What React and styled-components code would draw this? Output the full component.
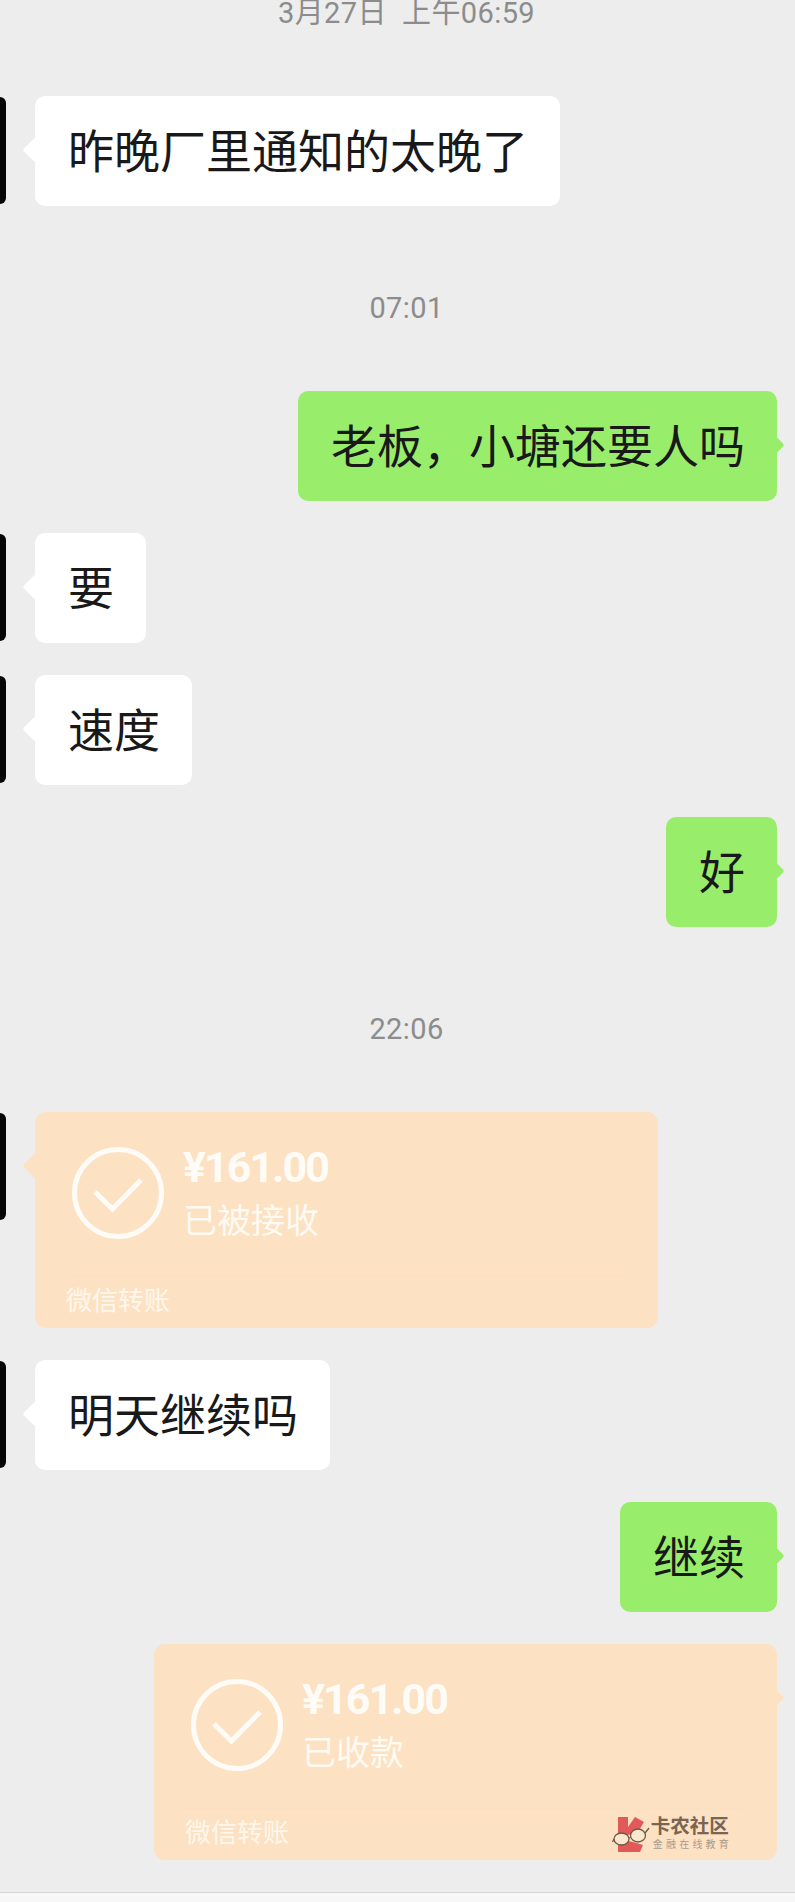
import React from 'react'
import styled, { createGlobalStyle } from 'styled-components'

const GlobalStyle = createGlobalStyle`
  html, body {
    margin: 0;
    padding: 0;
    background: #ededed;
  }
`

const Page = styled.div`
  display: flex;
  flex-direction: column;
  height: 1902px;
  overflow: hidden;
  font-family: Roboto, "Noto Sans CJK SC", sans-serif;
`

const Chat = styled.div`
  flex: 1;
  display: flex;
  flex-direction: column;
  padding-right: 18px;
  background: #ededed;
`

const BottomBar = styled.div`
  height: 11px;
  background: #f7f7f7;
  border-top: 1px solid #d6d6d6;
`

const TimeLabel = styled.div`
  height: 36px;
  line-height: 36px;
  margin: ${props => (props.$first ? '-5px' : '52px')} 0 65px 36px;
  text-align: center;
  font-size: 29px;
  letter-spacing: 0.4px;
  color: #8c8c8c;
  white-space: pre;
`

const Row = styled.div`
  display: flex;
  justify-content: ${props => (props.$mine ? 'flex-end' : 'flex-start')};
  gap: 29px;
  margin-bottom: 32px;
`

const Avatar = styled.div`
  flex: none;
  width: 6px;
  height: 107px;
  margin-top: 1px;
  background: #050505;
  border-radius: 0 6px 6px 0;
`

const Tail = styled.div`
  position: absolute;
  top: 45px;
  ${props => (props.$mine ? 'right: -4px;' : 'left: -9px;')}
  width: 18px;
  height: 18px;
  border-radius: 3px;
  background: inherit;
  transform: rotate(45deg);
`

const Bubble = styled.div`
  position: relative;
  box-sizing: border-box;
  height: 110px;
  padding: 0 32px 0 33px;
  line-height: 112px;
  border-radius: 10px;
  font-size: 46px;
  color: #191919;
  white-space: nowrap;
  background: ${props => (props.$mine ? '#98ee6b' : '#ffffff')};
`

const Card = styled.div`
  position: relative;
  box-sizing: border-box;
  width: 623px;
  height: 216px;
  border-radius: 11px;
  background: #fde1c3;
`

const CardBody = styled.div`
  display: flex;
  gap: 19px;
  height: 164px;
  box-sizing: border-box;
  padding: 35px 0 0 37px;
`

const CheckIcon = styled.svg`
  flex: none;
  width: 92px;
  height: 92px;
`

const CardText = styled.div`
  display: flex;
  flex-direction: column;
`

const Amount = styled.div`
  height: 46px;
  line-height: 46px;
  margin-top: -3px;
  font-size: 43px;
  font-weight: 700;
  letter-spacing: -2px;
  color: #fffcf7;
`

const Status = styled.div`
  margin-top: 8px;
  height: 46px;
  line-height: 46px;
  font-size: 34px;
  color: #fffaf2;
`

const CardDivider = styled.div`
  height: 1px;
  margin: 0 34px 0 30px;
  background: #fcdfc0;
`

const CardFooter = styled.div`
  height: 51px;
  line-height: 48px;
  padding-left: 31px;
  font-size: 26px;
  color: #fff7ec;
`

const Watermark = styled.div`
  position: absolute;
  right: 45px;
  bottom: 7px;
  display: flex;
  align-items: center;
  gap: 1px;
`

const WatermarkText = styled.div`
  display: flex;
  flex-direction: column;
  gap: 2px;
`

const WatermarkName = styled.div`
  font-size: 19.5px;
  line-height: 20px;
  font-weight: 700;
  color: #7a6452;
  white-space: nowrap;
`

const WatermarkSlogan = styled.div`
  font-size: 10px;
  line-height: 12px;
  letter-spacing: 3.2px;
  padding-left: 2px;
  color: #a99a8b;
  white-space: nowrap;
`

const Check = () => (
  <CheckIcon viewBox="0 0 92 92" fill="none" stroke="#fffcf7">
    <circle cx="46" cy="46" r="43.5" strokeWidth="5" />
    <path d="M23 45 L40.5 62 L69 33" strokeWidth="5" />
  </CheckIcon>
)

const LogoMark = () => (
  <svg width="38" height="38" viewBox="0 0 38 38">
    <path d="M6 2 H16 V12 L23 2 L32 7 L26 17 L16 20 V26 L21 27 L31 30 L28 37 H6 Z" fill="#e2595a" />
    <ellipse cx="9.5" cy="24" rx="7.5" ry="6" fill="#f9e8cf" stroke="#6f5a44" strokeWidth="1.3" />
    <ellipse cx="26" cy="20.5" rx="7.5" ry="6.5" fill="#f9e8cf" stroke="#6f5a44" strokeWidth="1.3" />
    <path d="M17 23 L18.5 22.5 M33 18 L37 13 M2 24 L0.5 27" stroke="#6f5a44" strokeWidth="1.3" fill="none" />
  </svg>
)

const Message = ({ mine, children }) => (
  <Row $mine={mine}>
    {!mine && <Avatar />}
    <Bubble $mine={mine}>
      <Tail $mine={mine} />
      {children}
    </Bubble>
  </Row>
)

const Transfer = ({ mine, status, children }) => (
  <Row $mine={mine}>
    {!mine && <Avatar />}
    <Card>
      <Tail $mine={mine} />
      <CardBody>
        <Check />
        <CardText>
          <Amount>¥161.00</Amount>
          <Status>{status}</Status>
        </CardText>
      </CardBody>
      <CardDivider />
      <CardFooter>微信转账</CardFooter>
      {children}
    </Card>
  </Row>
)

export default function App() {
  return (
    <Page>
      <GlobalStyle />
      <Chat>
        <TimeLabel $first>{'3月27日  上午06:59'}</TimeLabel>
        <Message>昨晚厂里通知的太晚了</Message>
        <TimeLabel>07:01</TimeLabel>
        <Message mine>老板，小塘还要人吗</Message>
        <Message>要</Message>
        <Message>速度</Message>
        <Message mine>好</Message>
        <TimeLabel>22:06</TimeLabel>
        <Transfer status="已被接收" />
        <Message>明天继续吗</Message>
        <Message mine>继续</Message>
        <Transfer mine status="已收款">
          <Watermark>
            <LogoMark />
            <WatermarkText>
              <WatermarkName>卡农社区</WatermarkName>
              <WatermarkSlogan>金融在线教育</WatermarkSlogan>
            </WatermarkText>
          </Watermark>
        </Transfer>
      </Chat>
      <BottomBar />
    </Page>
  )
}
